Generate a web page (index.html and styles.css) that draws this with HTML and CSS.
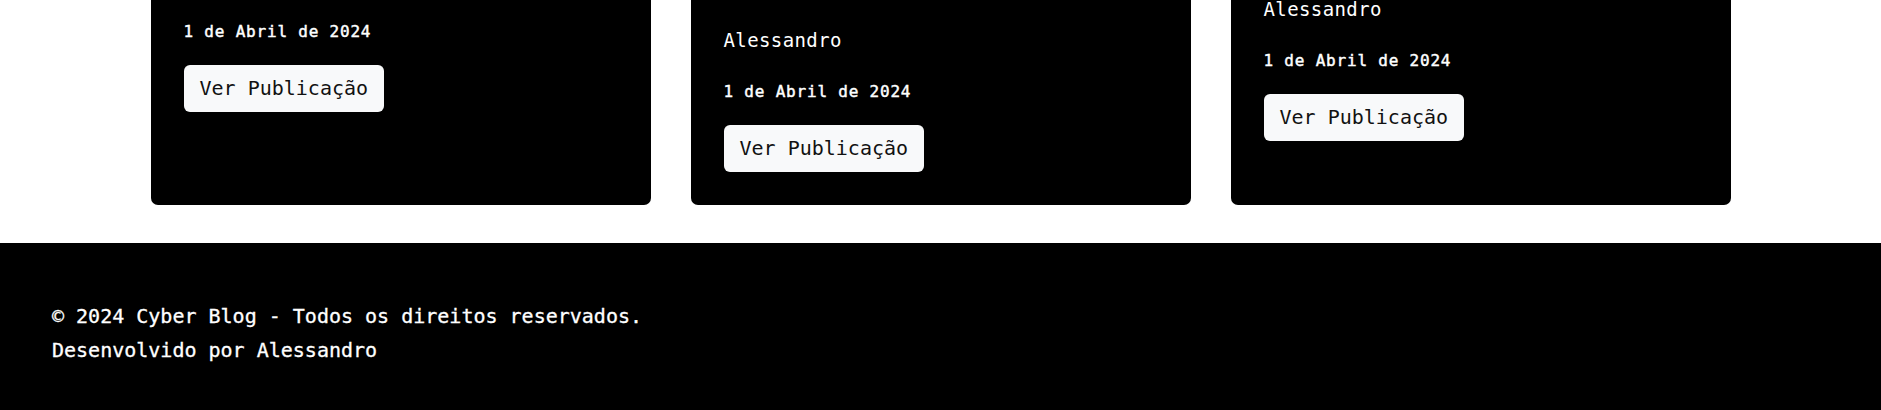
FILE: index.html
```html
<!DOCTYPE html>
<html lang="pt-BR">
<head>
<meta charset="utf-8">
<title>Cyber Blog</title>
<link rel="stylesheet" href="styles.css">
</head>
<body>
<main class="posts">
  <div class="posts-grid">
    <article class="card card--shift-a">
      <p class="card-date">1 de Abril de 2024</p>
      <a class="btn" href="#">Ver Publicação</a>
    </article>
    <article class="card card--shift-b">
      <p class="card-author">Alessandro</p>
      <p class="card-date">1 de Abril de 2024</p>
      <a class="btn" href="#">Ver Publicação</a>
    </article>
    <article class="card card--shift-c">
      <p class="card-author">Alessandro</p>
      <p class="card-date">1 de Abril de 2024</p>
      <a class="btn" href="#">Ver Publicação</a>
    </article>
  </div>
</main>
<footer class="site-footer">
  <p class="footer-line">© 2024 Cyber Blog - Todos os direitos reservados.</p>
  <p class="footer-line">Desenvolvido por Alessandro</p>
</footer>
</body>
</html>
```

FILE: styles.css
```css
* {
  box-sizing: border-box;
}

html, body {
  margin: 0;
  padding: 0;
  background: #ffffff;
  font-family: "DejaVu Sans Mono", "Liberation Mono", monospace;
  color: #ffffff;
}

.posts {
  padding-bottom: 38px;
}

.posts-grid {
  max-width: 1580px;
  margin: 0 auto;
  display: grid;
  grid-template-columns: repeat(3, 1fr);
  gap: 40px;
  align-items: stretch;
}

.card {
  background: #000000;
  border-radius: 0 0 7px 7px;
  padding: 0 33px 33px;
  display: flex;
  flex-direction: column;
  align-items: flex-start;
  overflow: hidden;
}

.card--shift-a {
  padding-top: 21px;
}

.card--shift-a .card-date {
  margin-bottom: 22px;
}

.card--shift-b {
  padding-top: 31px;
}

.card--shift-c {
  padding-top: 0;
}

.card-author {
  margin: 0 0 31px;
  font-size: 19px;
  line-height: 19px;
  letter-spacing: 0.4px;
  color: #ffffff;
}

.card-date {
  margin: 0 0 22px;
  font-size: 16px;
  line-height: 22px;
  letter-spacing: 0.8px;
  -webkit-text-stroke: 0.45px #ffffff;
  color: #ffffff;
}

.btn {
  display: inline-block;
  background: #f8f9fa;
  color: #111111;
  text-decoration: none;
  font-size: 20px;
  line-height: 25px;
  padding: 11px 16px;
  border-radius: 6px;
}

.site-footer {
  background: #000000;
  color: #ffffff;
  padding: 56px 52px 43px;
}

.footer-line {
  margin: 0;
  font-size: 20px;
  line-height: 34px;
  -webkit-text-stroke: 0.3px #ffffff;
}
```
